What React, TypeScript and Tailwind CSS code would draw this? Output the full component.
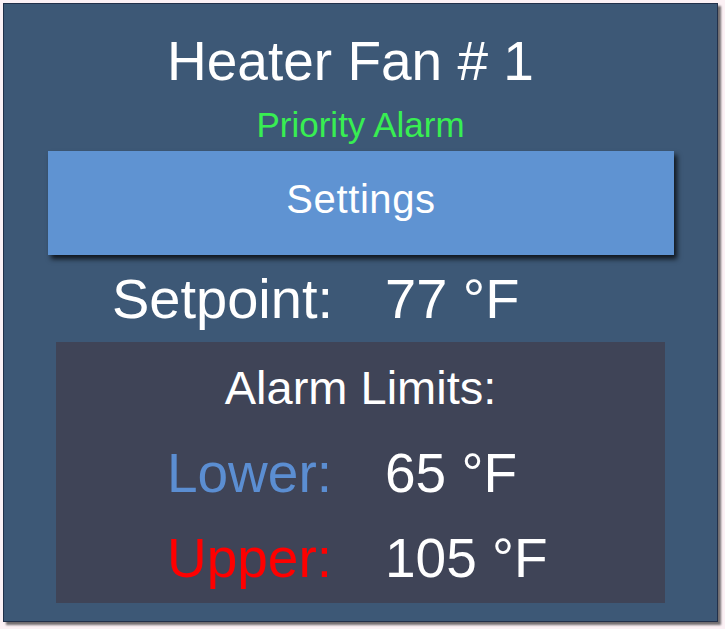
import React from "react";

export default function App() {
  const font = { fontFamily: '"Liberation Sans", Arial, sans-serif' };
  return (
    <div className="w-[725px] h-[629px] bg-[#fcf1f5] pt-[3px] pl-[3px]" style={font}>
      <div className="w-[715px] h-[619px] bg-[#3d5876] border border-[#22304a] shadow-[3px_3px_2px_rgba(0,0,0,0.55)] flex flex-col">
        <div className="mt-[27px] h-[60px] leading-[60px] text-[55px] text-white text-center pr-[20px]">
          Heater Fan # 1
        </div>
        <div className="mt-[14px] h-[40px] leading-[40px] text-[35px] text-[#38ee52] text-center">
          Priority Alarm
        </div>
        <div className="mt-[6px] ml-[44px] mr-[43px] h-[104px] bg-[#5f93d2] shadow-[3px_4px_5px_rgba(0,0,0,0.75)] pt-[26px]">
          <div className="h-[44px] leading-[44px] text-[40px] tracking-[0.6px] text-white text-center">
            Settings
          </div>
        </div>
        <div className="mt-[12px] h-[64px] leading-[64px] text-[56px] text-white grid grid-cols-[329px_1fr] gap-x-[52px]">
          <div className="text-right">Setpoint:</div>
          <div>77 °F</div>
        </div>
        <div className="mt-[11px] ml-[52px] w-[609px] h-[261px] bg-[#3f4457] pt-[20px] flex flex-col">
          <div className="h-[52px] leading-[52px] text-[47px] text-white text-center">
            Alarm Limits:
          </div>
          <div className="mt-[27px] h-[64px] leading-[64px] text-[55px] grid grid-cols-[276px_1fr] gap-x-[53px]">
            <div className="text-right text-[#5b8ed2]">Lower:</div>
            <div className="text-white">65 °F</div>
          </div>
          <div className="mt-[21px] h-[64px] leading-[64px] text-[55px] grid grid-cols-[276px_1fr] gap-x-[53px]">
            <div className="text-right text-[#ff0000]">Upper:</div>
            <div className="text-white">105 °F</div>
          </div>
        </div>
      </div>
    </div>
  );
}
